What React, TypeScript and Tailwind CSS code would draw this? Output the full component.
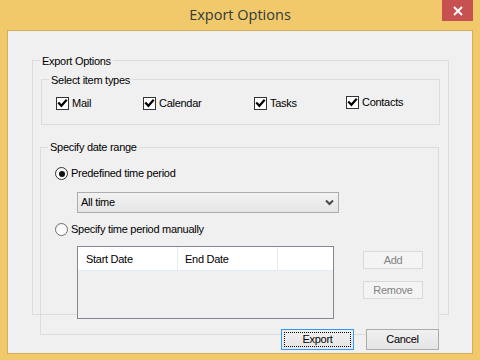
import React from "react";

const FONT = "font-['Liberation_Sans',Arial,sans-serif] text-[11px] leading-[13px] tracking-[-0.28px] text-black";

function CheckBox({ label, className }: { label: string; className?: string }) {
  return (
    <div className={`flex items-center h-[13px] ${className ?? ""}`}>
      <span className="w-[13px] h-[13px] border border-[#333333] bg-white flex items-center justify-center shrink-0">
        <svg width="11" height="11" viewBox="0 0 11 11">
          <path d="M2 5.2 L4.4 7.8 L9 2.6" stroke="#000" strokeWidth="2.2" fill="none" strokeLinecap="square" />
        </svg>
      </span>
      <span className="ml-[3px]">{label}</span>
    </div>
  );
}

function Radio({ label, checked, className }: { label: string; checked?: boolean; className?: string }) {
  return (
    <div className={`flex items-center h-[13px] ${className ?? ""}`}>
      <span
        className={`w-[13px] h-[13px] rounded-full border ${checked ? "border-[#333333]" : "border-[#6f6f6f]"} bg-gradient-to-b from-[#f4f4f4] to-[#ffffff] flex items-center justify-center shrink-0`}
      >
        {checked && <span className="w-[6px] h-[6px] rounded-full bg-[#111111]" />}
      </span>
      <span className="ml-[3px]">{label}</span>
    </div>
  );
}

function GroupLabel({ text, top }: { text: string; top: string }) {
  return <div className={`${top} ml-[7px] px-[2px] bg-[#f0f0f0] w-fit h-[13px]`}>{text}</div>;
}

export default function App() {
  return (
    <div className="w-[480px] h-[360px] bg-[#f1c96b] flex flex-col overflow-hidden">
      {/* title bar */}
      <div className="relative h-[30px] flex items-center justify-center shrink-0">
        <span className="font-['Open_Sans',sans-serif] text-[14.5px] text-[#2f3a3a] leading-none mt-[1px]">Export Options</span>
        <div className="absolute right-[7px] top-0 w-[31px] h-[21px] bg-[#c75050] flex items-center justify-center">
          <svg width="10" height="10" viewBox="0 0 10 10">
            <path d="M1 1 L9 9 M9 1 L1 9" stroke="#fff" strokeWidth="2" />
          </svg>
        </div>
      </div>

      {/* client area */}
      <div className={`mx-[7px] h-[324px] border border-[#d3af58] bg-[#f0f0f0] shrink-0 flex flex-col ${FONT}`}>
        {/* outer group */}
        <div className="relative ml-[24px] mt-[29px] w-[417px] border-l border-t border-r border-[#dcdcdc] pb-[1px] flex flex-col">
          <GroupLabel text="Export Options" top="-mt-[6px]" />

          {/* item types */}
          <div className="ml-[8px] mt-[11px] w-[399px] h-[46px] border border-[#dcdcdc] flex flex-col">
            <GroupLabel text="Select item types" top="-mt-[6px]" />
            <div className="flex mt-[10px] ml-[14px]">
              <CheckBox label="Mail" className="w-[87px]" />
              <CheckBox label="Calendar" className="w-[111px]" />
              <CheckBox label="Tasks" className="w-[92px]" />
              <CheckBox label="Contacts" className="-mt-[1px]" />
            </div>
          </div>

          {/* date range */}
          <div className="ml-[7px] mt-[22px] -mb-[21px] w-[399px] h-[188px] border border-[#dcdcdc] flex flex-col">
            <GroupLabel text="Specify date range" top="-mt-[7px]" />
            <Radio label="Predefined time period" checked className="mt-[13px] ml-[14px]" />
            <div className="mt-[12px] ml-[36px] w-[262px] h-[21px] border border-[#acacac] bg-gradient-to-b from-[#f2f2f2] to-[#e5e5e5] flex items-center justify-between pl-[3px] pr-[4px]">
              <span>All time</span>
              <svg width="9" height="7" viewBox="0 0 9 7">
                <path d="M1 1.5 L4.5 5 L8 1.5" stroke="#4a4a4a" strokeWidth="2" fill="none" />
              </svg>
            </div>
            <Radio label="Specify time period manually" className="mt-[10px] ml-[14px]" />
            <div className="flex mt-[10px] ml-[36px]">
              <div className="w-[257px] h-[73px] border border-[#828790] flex flex-col">
                <div className="flex h-[24px] bg-white border-b border-[#e3ebf6]">
                  <div className="w-[100px] border-r border-[#e3ebf6] flex items-center pl-[8px] pt-[1px]">Start Date</div>
                  <div className="w-[100px] border-r border-[#e3ebf6] flex items-center pl-[7px] pt-[1px]">End Date</div>
                  <div className="flex-1" />
                </div>
              </div>
              <div className="ml-[29px] pt-[5px] flex flex-col gap-[12px]">
                <div className="w-[60px] h-[18px] border border-[#d9d9d9] bg-[#f4f4f4] text-[#838383] flex items-center justify-center">Add</div>
                <div className="w-[60px] h-[18px] border border-[#d9d9d9] bg-[#f4f4f4] text-[#838383] flex items-center justify-center">Remove</div>
              </div>
            </div>
          </div>

          {/* visible pieces of the outer group's bottom line */}
          <div className="absolute left-[-1px] bottom-0 w-[45px] h-px bg-[#dcdcdc]" />
          <div className="absolute right-[-1px] bottom-0 w-[11px] h-px bg-[#dcdcdc]" />
        </div>

        {/* dialog buttons */}
        <div className="relative flex justify-end gap-[12px] mt-[14px] mr-[33px]">
          <div className="w-[73px] h-[21px] border border-[#3399ff] bg-gradient-to-b from-[#f0f0f0] to-[#e5e5e5] p-[2px]">
            <div className="w-full h-full border border-dotted border-black flex items-center justify-center">Export</div>
          </div>
          <div className="w-[73px] h-[21px] border border-[#acacac] bg-gradient-to-b from-[#f0f0f0] to-[#e5e5e5] flex items-center justify-center">
            Cancel
          </div>
        </div>
      </div>
    </div>
  );
}
